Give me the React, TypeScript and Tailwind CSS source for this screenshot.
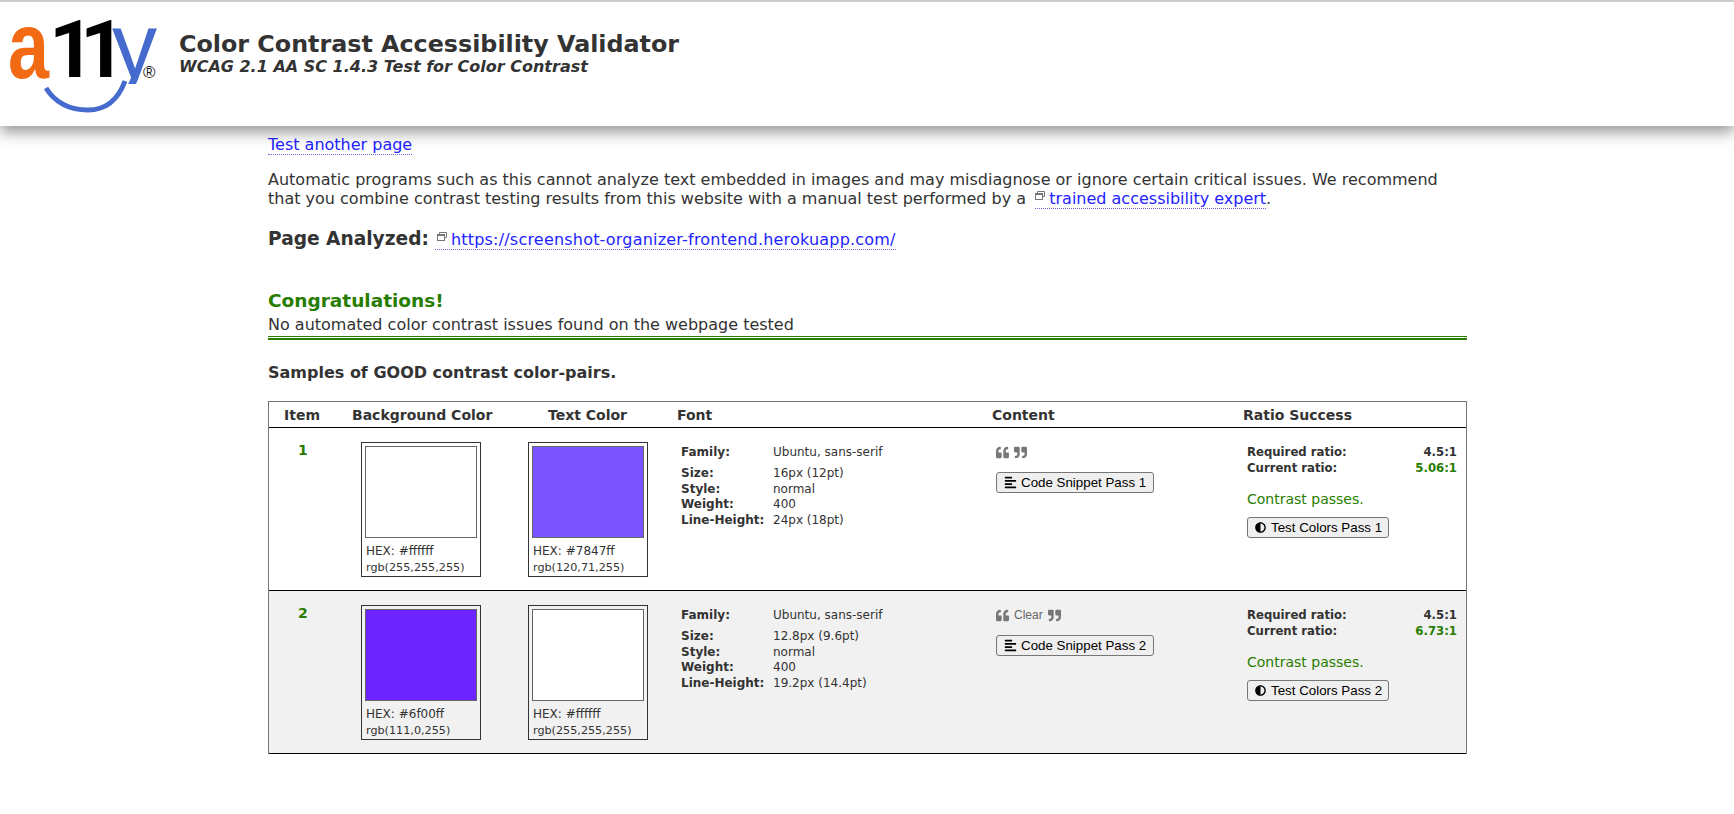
import { FaAdjust, FaAlignLeft, FaQuoteLeft, FaQuoteRight } from "react-icons/fa";

const VERDANA = "font-['DejaVu_Sans',Verdana,sans-serif]";
const ARIAL = "font-['Liberation_Sans',Arial,sans-serif]";

function Logo() {
  return (
    <svg width="160" height="112" viewBox="0 0 160 112" className="shrink-0">
      <defs>
        <clipPath id="y-tail">
          <rect x="100" y="20" width="60" height="62" />
        </clipPath>
      </defs>
      <text x="8" y="76" fontFamily="Liberation Sans" fontWeight="700" fontSize="94" textLength="41" lengthAdjust="spacingAndGlyphs" fill="#f26a13">a</text>
      <text x="49" y="75" fontFamily="Roboto" fontWeight="700" fontSize="80" fill="#000">1</text>
      <text x="80" y="75" fontFamily="Roboto" fontWeight="700" fontSize="80" fill="#000">1</text>
      <g clipPath="url(#y-tail)">
        <text x="112" y="76" fontFamily="Liberation Sans" fontSize="92" textLength="45" lengthAdjust="spacingAndGlyphs" fill="#466bcf">y</text>
      </g>
      <path d="M46 86 C56 102 72 108 88 108 C106 108 118 98 125 79" fill="none" stroke="#466bcf" strokeWidth="5" />
      <text x="143" y="76" fontFamily="Liberation Sans" fontSize="17" fill="#222">®</text>
    </svg>
  );
}

function WindowIcon() {
  return (
    <svg width="10" height="10" viewBox="0 0 10 10" className="mr-[4px] inline-block align-[3px]" fill="none" stroke="#777" strokeWidth="1">
      <path d="M2.5 2.5V.5h7v5h-2" />
      <rect x=".5" y="2.5" width="7" height="6" />
      <path d="M.5 3.5h7" />
    </svg>
  );
}

function Swatch({ color, hex, rgb }: { color: string; hex: string; rgb: string }) {
  return (
    <div className="h-[135px] w-[120px] border border-[#333] px-[3px] pt-[3px]">
      <div className="h-[92px] w-[112px] border border-[#666]" style={{ backgroundColor: color }} />
      <div className="mt-[5px] pl-[1px] text-[12px] leading-[17px]">HEX: {hex}</div>
      <div className="pl-[1px] text-[11.2px] leading-[16px]">{rgb}</div>
    </div>
  );
}

const FONT_LABEL = "w-[92px] font-bold";

function FontInfo({ size, lineHeight }: { size: string; lineHeight: string }) {
  return (
    <div className="pt-[3px] text-[12px] leading-[15.4px]">
      <div className="mb-[6px] flex">
        <span className={FONT_LABEL}>Family:</span>
        <span>Ubuntu, sans-serif</span>
      </div>
      <div className="flex"><span className={FONT_LABEL}>Size:</span><span>{size}</span></div>
      <div className="flex"><span className={FONT_LABEL}>Style:</span><span>normal</span></div>
      <div className="flex"><span className={FONT_LABEL}>Weight:</span><span>400</span></div>
      <div className="flex"><span className={FONT_LABEL}>Line-Height:</span><span>{lineHeight}</span></div>
    </div>
  );
}

function Row({
  item, alt, bg, text, size, lineHeight, clear, snippet, ratio, test,
}: {
  item: string;
  alt?: boolean;
  bg: { color: string; hex: string; rgb: string };
  text: { color: string; hex: string; rgb: string };
  size: string;
  lineHeight: string;
  clear?: boolean;
  snippet: string;
  ratio: string;
  test: string;
}) {
  return (
    <div className={`grid h-[163px] grid-cols-[92px_167px_153px_315px_251px_1fr] border-b border-black pt-[14px] ${alt ? "bg-[#f1f1f1]" : ""}`}>
      <div className="pl-[29px] text-[14px] leading-[17px] font-bold text-[#287d00]">{item}</div>
      <div><Swatch {...bg} /></div>
      <div><Swatch {...text} /></div>
      <div><FontInfo size={size} lineHeight={lineHeight} /></div>
      <div className="pt-[2px]">
        <div className={`flex h-[16px] items-center gap-[5px] text-[12px] text-[#666] ${ARIAL}`}>
          <FaQuoteLeft className="h-[13px] w-[13px] text-[#777]" />
          {clear && <span>Clear</span>}
          <FaQuoteRight className="h-[13px] w-[13px] text-[#777]" />
        </div>
        <button className={`mt-[12px] flex h-[21px] w-[158px] items-center rounded-[3px] border border-[#767676] bg-[#efefef] pl-[7px] text-[13.33px] text-black ${ARIAL}`}>
          <FaAlignLeft className="mr-[4px] h-[13px] w-[13px]" />
          {snippet}
        </button>
      </div>
      <div className="pr-[9px] pt-[2px]">
        <div className="flex justify-between text-[11.7px] leading-[16px] font-bold">
          <span>Required ratio:</span><span>4.5:1</span>
        </div>
        <div className="flex justify-between text-[11.7px] leading-[16px] font-bold">
          <span>Current ratio:</span><span className="text-[#287d00]">{ratio}</span>
        </div>
        <div className="mt-[15px] text-[14px] leading-[17px] text-[#287d00]">Contrast passes.</div>
        <button className={`mt-[9px] flex h-[21px] w-[142px] items-center rounded-[3px] border border-[#767676] bg-[#efefef] pl-[7px] text-[13.33px] text-black ${ARIAL}`}>
          <FaAdjust className="mr-[5px] h-[11px] w-[11px]" />
          {test}
        </button>
      </div>
    </div>
  );
}

export default function App() {
  return (
    <div className={`min-h-[814px] bg-white text-[#333] ${VERDANA}`}>
      <header className="relative z-10 flex h-[126px] items-start border-t-2 border-[#ccc] bg-white shadow-[0_6px_14px_rgba(60,60,60,0.55)]">
        <Logo />
        <div className="ml-[19px] pt-[27px]">
          <h1 className="text-[23.8px] leading-[30px] font-bold">Color Contrast Accessibility Validator</h1>
          <p className="text-[16px] leading-[16px] font-bold italic">WCAG 2.1 AA SC 1.4.3 Test for Color Contrast</p>
        </div>
      </header>

      <main className="ml-[268px] w-[1199px]">
        <a className="mt-[9px] inline-block border-b border-dotted border-[#6a6ae8] text-[16px] leading-[19px] text-[#2222ff]">Test another page</a>
        <p className="mt-[13px] w-[1190px] text-[16px] leading-[19px]">
          Automatic programs such as this cannot analyze text embedded in images and may misdiagnose or ignore certain critical issues. We recommend that you combine contrast testing results from this website with a manual test performed by a{" "}
          <a className="ml-[4px] border-b border-dotted border-[#6a6ae8] text-[#2222ff]"><WindowIcon />trained accessibility expert</a>.
        </p>
        <div className="mt-[19px] flex items-baseline">
          <h2 className="text-[18.6px] leading-[24px] font-bold">Page Analyzed:</h2>
          <a className="ml-[6px] border-b border-dotted border-[#6a6ae8] pl-[2px] text-[16px] leading-[19px] tracking-[0.2px] text-[#2222ff]"><WindowIcon />https://screenshot-organizer-frontend.herokuapp.com/</a>
        </div>
        <h2 className="mt-[38px] text-[18.5px] leading-[24px] font-bold text-[#287d00]">Congratulations!</h2>
        <p className="mt-[2px] border-b border-[#287d00] pb-[1px] text-[16px] leading-[20px]">No automated color contrast issues found on the webpage tested</p>
        <div className="mt-[1px] border-b-2 border-[#287d00]" />
        <h3 className="mt-[23px] text-[16px] leading-[20px] font-bold">Samples of GOOD contrast color-pairs.</h3>

        <div className="mt-[18px] border-x border-t border-[#767676]">
          <div className="grid h-[26px] grid-cols-[92px_167px_153px_315px_251px_1fr] items-center border-b border-black pt-[1px] text-[14px] font-bold">
            <div className="pl-[15px]">Item</div>
            <div><span className="-ml-[9px] block">Background Color</span></div>
            <div className="pl-[20px]">Text Color</div>
            <div className="-ml-[4px]">Font</div>
            <div className="-ml-[4px]">Content</div>
            <div className="-ml-[4px]">Ratio Success</div>
          </div>
          <Row
            item="1"
            bg={{ color: "#ffffff", hex: "#ffffff", rgb: "rgb(255,255,255)" }}
            text={{ color: "#7a55ff", hex: "#7847ff", rgb: "rgb(120,71,255)" }}
            size="16px (12pt)"
            lineHeight="24px (18pt)"
            snippet="Code Snippet Pass 1"
            ratio="5.06:1"
            test="Test Colors Pass 1"
          />
          <Row
            item="2"
            alt
            bg={{ color: "#6c25ff", hex: "#6f00ff", rgb: "rgb(111,0,255)" }}
            text={{ color: "#ffffff", hex: "#ffffff", rgb: "rgb(255,255,255)" }}
            size="12.8px (9.6pt)"
            lineHeight="19.2px (14.4pt)"
            clear
            snippet="Code Snippet Pass 2"
            ratio="6.73:1"
            test="Test Colors Pass 2"
          />
        </div>
      </main>
    </div>
  );
}
